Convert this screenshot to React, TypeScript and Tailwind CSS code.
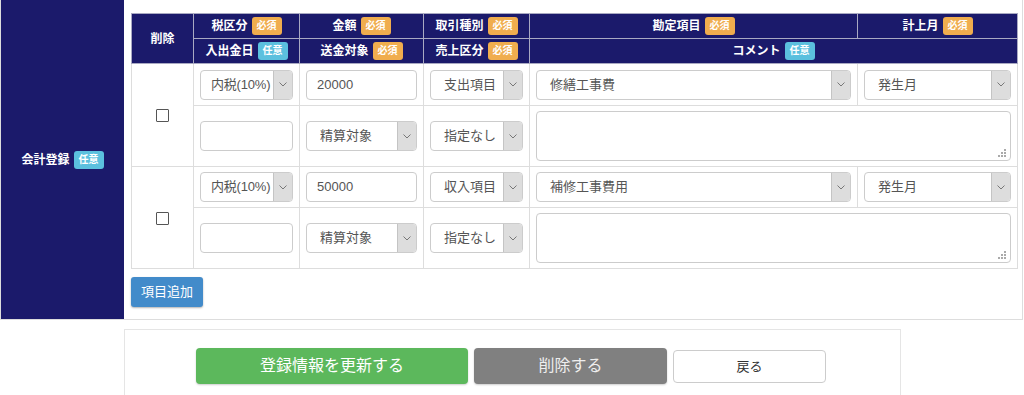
import React from 'react';

const FONT = "font-['Liberation_Sans','Noto_Sans_CJK_JP',sans-serif]";

function Badge({ kind }: { kind: 'req' | 'opt' }) {
  return (
    <span
      className={`ml-[4px] inline-block rounded-[3px] px-[5px] align-middle text-[10px] font-bold leading-[18px] text-white ${
        kind === 'req' ? 'bg-[#f0ad4e]' : 'bg-[#5bc0de]'
      }`}
    >
      {kind === 'req' ? '必須' : '任意'}
    </span>
  );
}

function Chevron() {
  return (
    <svg width="8" height="5" viewBox="0 0 8 5" fill="none">
      <path d="M0.5 0.5 L4 4 L7.5 0.5" stroke="#777" strokeWidth="1" />
    </svg>
  );
}

function Select({ value, tight }: { value: string; tight?: boolean }) {
  return (
    <div className="flex h-[30px] w-full overflow-hidden rounded-[4px] border border-[#ccc] bg-white">
      <span
        className={`flex-1 whitespace-nowrap text-[13px] leading-[28px] text-[#555] ${
          tight ? 'pl-[10px] tracking-[-0.2px]' : 'pl-[13px]'
        }`}
      >
        {value}
      </span>
      <span className="flex w-[19px] shrink-0 items-center justify-center border-l border-[#c4c4c4] bg-[#ddd]">
        <Chevron />
      </span>
    </div>
  );
}

function TextInput({ value }: { value: string }) {
  return (
    <div className="h-[30px] w-full rounded-[4px] border border-[#ccc] bg-white pl-[10px] text-[13px] leading-[28px] text-[#555]">
      {value}
    </div>
  );
}

function Comment() {
  return (
    <div className="relative h-[50px] w-full rounded-[4px] border border-[#ccc] bg-white">
      <svg className="absolute bottom-[3px] right-[4px]" width="8" height="8" viewBox="0 0 8 8">
        <rect x="6" y="0" width="2" height="2" fill="#aaa" />
        <rect x="3" y="3" width="2" height="2" fill="#aaa" />
        <rect x="6" y="3" width="2" height="2" fill="#aaa" />
        <rect x="0" y="6" width="2" height="2" fill="#aaa" />
        <rect x="3" y="6" width="2" height="2" fill="#aaa" />
        <rect x="6" y="6" width="2" height="2" fill="#aaa" />
      </svg>
    </div>
  );
}

interface Entry {
  tax: string;
  amount: string;
  kind: string;
  account: string;
  month: string;
}

const entries: Entry[] = [
  { tax: '内税(10%)', amount: '20000', kind: '支出項目', account: '修繕工事費', month: '発生月' },
  { tax: '内税(10%)', amount: '50000', kind: '収入項目', account: '補修工事費用', month: '発生月' },
];

const th = 'h-[25px] border border-[#a9a9c2] bg-[#1b1a6b] p-0 text-center text-[12px] font-bold text-white';
const td = 'border border-[#ddd] px-[6px] py-0 align-middle';

export default function App() {
  return (
    <div className={`h-[395px] w-[1024px] overflow-hidden bg-white ${FONT}`}>
      <div className="flex w-[1023px] border-b border-l border-r border-[#ddd]">
        <div className="flex w-[123px] shrink-0 items-center justify-center bg-[#1b1a6b] text-[12px] font-bold text-white">
          会計登録
          <Badge kind="opt" />
        </div>

        <div className="flex-1 pb-[12px] pl-[7px] pt-[13px]">
          <table className="w-[886px] table-fixed border-collapse">
            <colgroup>
              <col className="w-[62px]" />
              <col className="w-[106px]" />
              <col className="w-[124px]" />
              <col className="w-[106px]" />
              <col className="w-[328px]" />
              <col className="w-[160px]" />
            </colgroup>
            <thead>
              <tr>
                <th rowSpan={2} className={th}>削除</th>
                <th className={th}>税区分<Badge kind="req" /></th>
                <th className={th}>金額<Badge kind="req" /></th>
                <th className={th}>取引種別<Badge kind="req" /></th>
                <th className={th}>勘定項目<Badge kind="req" /></th>
                <th className={th}>計上月<Badge kind="req" /></th>
              </tr>
              <tr>
                <th className={th}>入出金日<Badge kind="opt" /></th>
                <th className={th}>送金対象<Badge kind="req" /></th>
                <th className={th}>売上区分<Badge kind="req" /></th>
                <th colSpan={2} className={th}>コメント<Badge kind="opt" /></th>
              </tr>
            </thead>
            <tbody>
              {entries.map((e, i) => (
                <React.Fragment key={i}>
                  <tr className={i === 0 ? 'h-[42px]' : 'h-[41px]'}>
                    <td rowSpan={2} className="border border-[#ddd] p-0 text-center align-middle">
                      <span className="inline-block h-[13px] w-[13px] rounded-[1px] border border-[#555] bg-white align-middle" />
                    </td>
                    <td className={td}><Select value={e.tax} tight /></td>
                    <td className={td}><TextInput value={e.amount} /></td>
                    <td className={td}><Select value={e.kind} /></td>
                    <td className={td}><Select value={e.account} /></td>
                    <td className={td}><Select value={e.month} /></td>
                  </tr>
                  <tr className="h-[61px]">
                    <td className={td}><TextInput value="" /></td>
                    <td className={td}><Select value="精算対象" /></td>
                    <td className={td}><Select value="指定なし" /></td>
                    <td colSpan={2} className={td}><Comment /></td>
                  </tr>
                </React.Fragment>
              ))}
            </tbody>
          </table>

          <button
            type="button"
            className="mt-[8px] h-[30px] w-[72px] rounded-[3px] bg-[#428bca] text-[13px] text-white shadow-[0_1px_2px_rgba(0,0,0,0.3)]"
          >
            項目追加
          </button>
        </div>
      </div>

      <div className="ml-[124px] mt-[9px] h-[90px] w-[777px] border border-[#e5e5e5] pt-[18px]">
        <div className="flex items-start justify-center gap-[6px] pr-[3px]">
          <button
            type="button"
            className="h-[36px] w-[272px] rounded-[4px] bg-[#5cb85c] text-[16px] text-white shadow-[0_1px_2px_rgba(0,0,0,0.2)]"
          >
            登録情報を更新する
          </button>
          <button
            type="button"
            className="h-[36px] w-[193px] rounded-[4px] bg-[#808080] text-[16px] text-[#eee] shadow-[0_1px_2px_rgba(0,0,0,0.2)]"
          >
            削除する
          </button>
          <button
            type="button"
            className="mt-[2px] h-[33px] w-[153px] rounded-[4px] border border-[#ccc] bg-white text-[13px] text-[#333]"
          >
            戻る
          </button>
        </div>
      </div>
    </div>
  );
}
